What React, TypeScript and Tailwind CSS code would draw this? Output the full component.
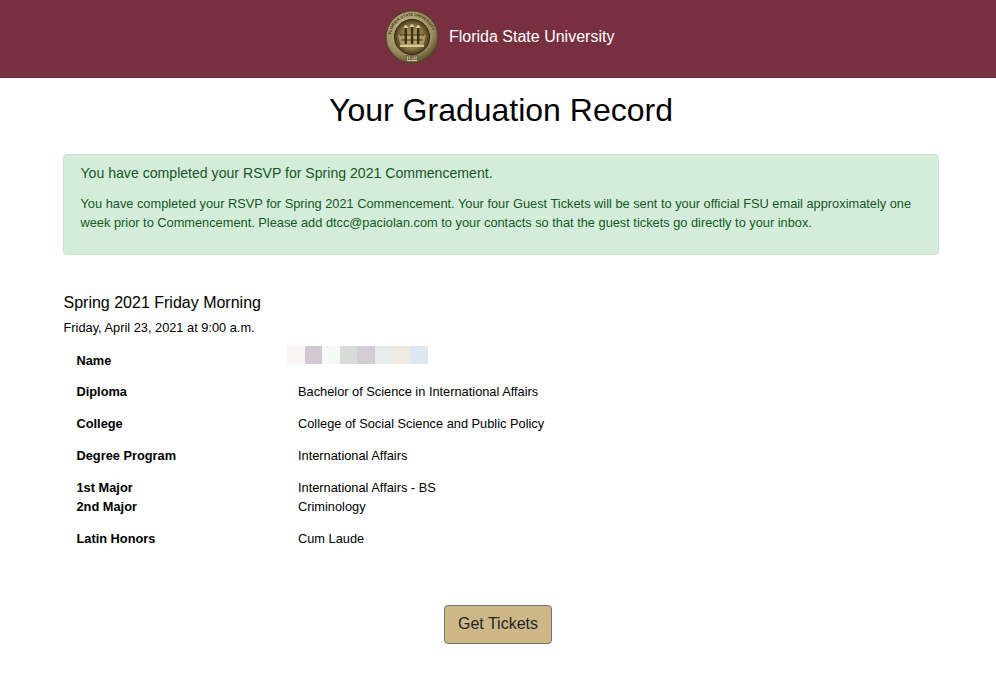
const rows = [
  { label: "Diploma", value: "Bachelor of Science in International Affairs", gap: "mt-[13px]" },
  { label: "College", value: "College of Social Science and Public Policy", gap: "mt-[13px]" },
  { label: "Degree Program", value: "International Affairs", gap: "mt-[13px]" },
];

const swatches = ["bg-[#f9f5f5]", "bg-[#d2c8d3]", "bg-[#f7f9f8]", "bg-[#d9dbd9]", "bg-[#d3ccd7]", "bg-[#e6ebec]", "bg-[#f0e9e0]", "bg-[#dde8f2]"];

function Seal() {
  return (
    <svg width="54" height="54" viewBox="0 0 54 54" aria-hidden="true">
      <defs>
        <radialGradient id="rim" cx="42%" cy="35%" r="70%">
          <stop offset="0%" stopColor="#c9bc8e" />
          <stop offset="70%" stopColor="#9c8d60" />
          <stop offset="100%" stopColor="#4f452a" />
        </radialGradient>
        <radialGradient id="core" cx="50%" cy="50%" r="52%">
          <stop offset="0%" stopColor="#b8a26a" />
          <stop offset="62%" stopColor="#8f7a45" />
          <stop offset="100%" stopColor="#3f3519" />
        </radialGradient>
        <path id="arc" d="M6 27 A21 21 0 0 1 48 27" />
      </defs>
      <circle cx="27" cy="27" r="26.500" fill="#4f452a" />
      <circle cx="27" cy="27" r="25.500" fill="url(#rim)" />
      <circle cx="27" cy="27" r="17.500" fill="url(#core)" stroke="#2f2811" strokeWidth="1" />
      <text fontSize="4" fill="#3a3117" fontFamily="Liberation Sans, sans-serif" fontWeight="700">
        <textPath href="#arc" startOffset="4%">FLORIDA STATE UNIVERSITY</textPath>
      </text>
      <path d="M13 25 H41 L38 36 H16 Z" fill="#d2c08a" opacity="0.45" />
      <path d="M19.500 18 h2.500 v16 h-2.500 z M25.800 17 h2.500 v17 h-2.500 z M32 18 h2.500 v16 h-2.500 z" fill="#3f3216" />
      <path d="M18.500 18 q2.300-6 4.600 0 z M24.700 17 q2.300-6 4.600 0 z M30.900 18 q2.300-6 4.600 0 z" fill="#d9cd9f" />
      <path d="M15 25 H39 M16 30 H38" stroke="#3e3216" strokeWidth="1" />
      <rect x="15" y="35" width="24" height="2" fill="#d8c995" />
      <rect x="21.500" y="45.500" width="11" height="6" fill="#d4c89d" stroke="#4a3f20" strokeWidth="0.6" />
      <text x="27" y="50.300" textAnchor="middle" fontSize="4.500" fontWeight="700" fill="#3e3216" fontFamily="Liberation Sans, sans-serif">1851</text>
    </svg>
  );
}

function Row({ label, value, className = "" }: { label: string; value: string; className?: string }) {
  return (
    <div className={`flex h-[19px] items-center leading-[19px] ${className}`}>
      <div className="w-[221.500px] shrink-0 font-bold">{label}</div>
      <div>{value}</div>
    </div>
  );
}

export default function App() {
  return (
    <div className="min-h-[683px] bg-white font-['Liberation_Sans',Arial,sans-serif] text-black">
      <header className="flex h-[78px] items-center bg-[#782f40] pb-[4px] pl-[385px]">
        <Seal />
        <span className="ml-[10px] text-[16px] text-white">Florida State University</span>
      </header>

      <main className="ml-[63px] w-[876px]">
        <h1 className="mt-[12px] text-center text-[32px] leading-[40px]">Your Graduation Record</h1>

        <div className="mt-[24px] h-[101px] rounded-[4px] border border-[#c3e6cb] bg-[#d4edda] pl-[16.500px] pr-[16px] pt-[10px] text-[#155724]">
          <p className="text-[14.100px] leading-[17px]">You have completed your RSVP for Spring 2021 Commencement.</p>
          <p className="mt-[12px] text-[12.800px] leading-[19.200px]">
            You have completed your RSVP for Spring 2021 Commencement. Your four Guest Tickets will be sent to your official FSU email approximately one week prior to Commencement. Please add dtcc@paciolan.com to your contacts so that the guest tickets go directly to your inbox.
          </p>
        </div>

        <h2 className="mt-[38px] pl-[0.500px] text-[16px] leading-[20px]">Spring 2021 Friday Morning</h2>
        <p className="mt-[7px] pl-[0.500px] text-[12.800px] leading-[16px]">Friday, April 23, 2021 at 9:00 a.m.</p>

        <section className="mt-[15px] pl-[13.500px] text-[12.800px]">
          <div className="flex h-[19px] items-center">
            <div className="w-[210.500px] shrink-0 font-bold">Name</div>
            <div className="-mt-[11px] flex h-[18px]">
              {swatches.map((c, i) => (
                <div key={i} className={`h-full w-[17.600px] ${c}`} />
              ))}
            </div>
          </div>
          <Row label={rows[0].label} value={rows[0].value} className="mt-[12px]" />
          <Row label={rows[1].label} value={rows[1].value} className={rows[1].gap} />
          <Row label={rows[2].label} value={rows[2].value} className={rows[2].gap} />
          <Row label="1st Major" value="International Affairs - BS" className="mt-[13px]" />
          <Row label="2nd Major" value="Criminology" />
          <Row label="Latin Honors" value="Cum Laude" className="mt-[13px]" />
        </section>
      </main>

      <div className="mt-[57px] flex justify-center">
        <button className="h-[39px] w-[108px] rounded-[4px] border border-[#6c757d] bg-[#ceb888] pb-[2px] text-[16px] text-[#212529]">
          Get Tickets
        </button>
      </div>
    </div>
  );
}
